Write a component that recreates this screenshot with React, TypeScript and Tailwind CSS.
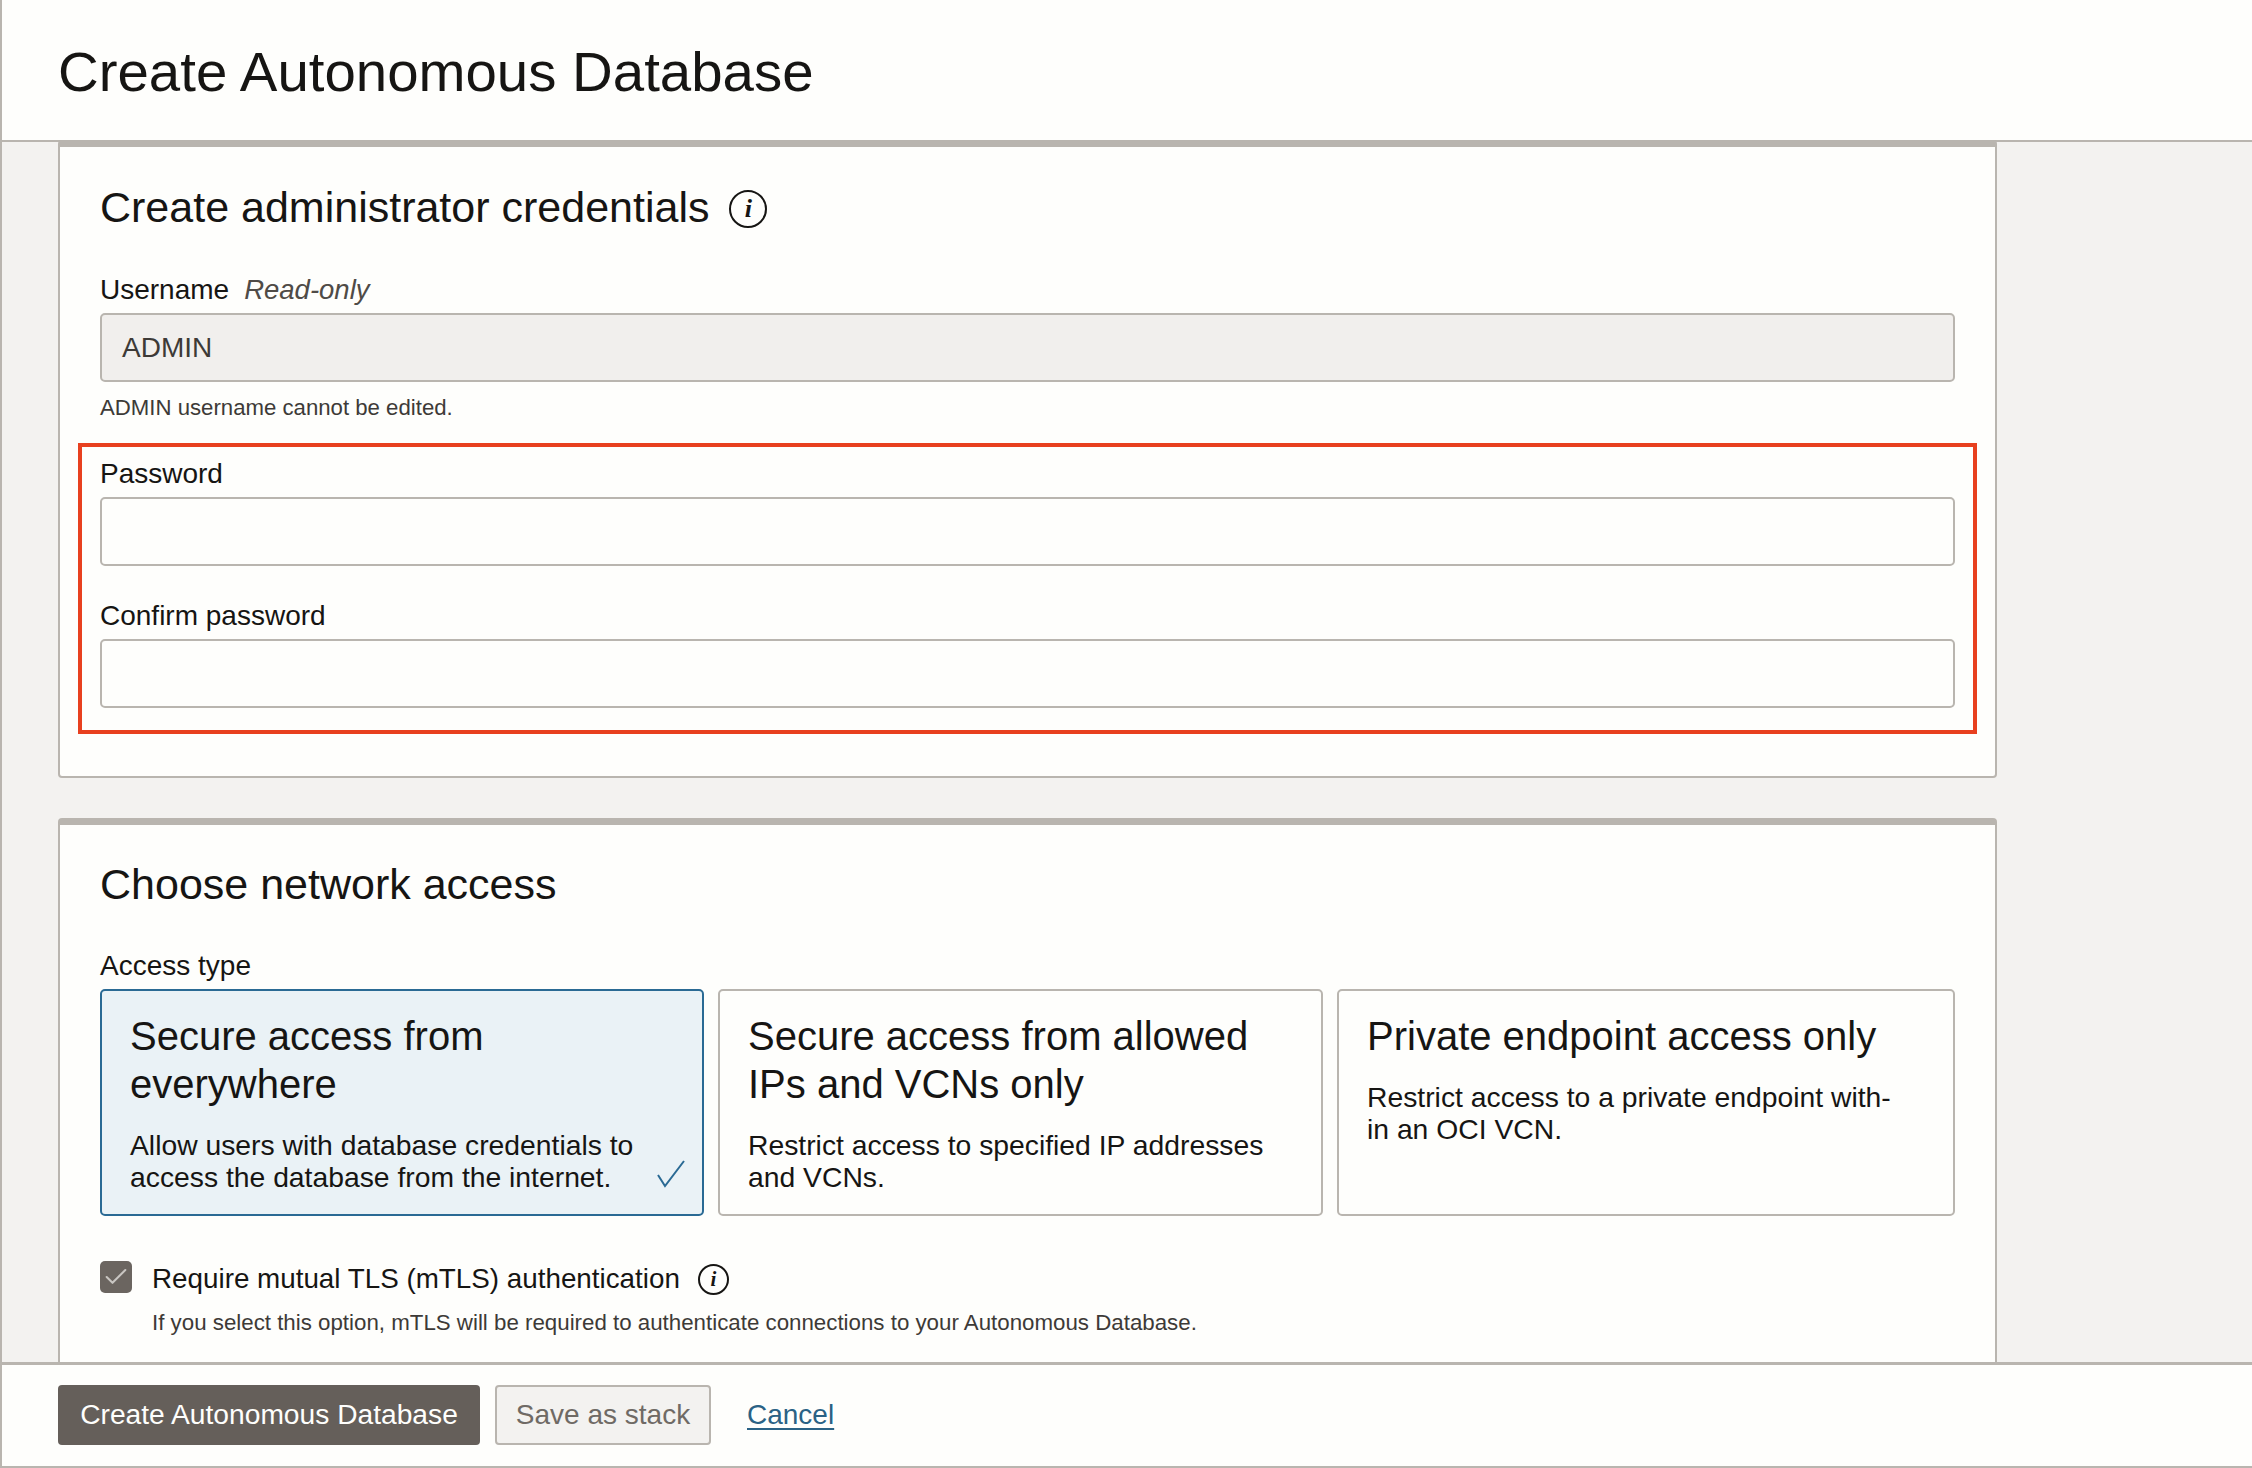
import { Check } from 'lucide-react';

const sans = 'font-["Liberation_Sans",Arial,sans-serif]';

function InfoIcon({ className }: { className: string }) {
    return (
        <span
            className={`inline-flex shrink-0 items-center justify-center rounded-full border-2 border-[#161513] font-["Liberation_Serif",serif] font-bold italic leading-none text-[#161513] ${className}`}
        >
            i
        </span>
    );
}

function Field({ label, readOnly, value }: { label: string; readOnly?: boolean; value?: string }) {
    return (
        <div>
            <div className="flex h-[36px] items-center gap-[15px] text-[28px] leading-[36px] text-[#161513]">
                <span>{label}</span>
                {readOnly && <span className="text-[27.5px] italic text-[#4f4b47]">Read-only</span>}
            </div>
            <div
                className={`mt-[5px] flex h-[69px] items-center rounded-[5px] border-2 border-[#b9b5af] px-[20px] text-[28px] text-[#3d3a37] ${
                    readOnly ? 'bg-[#f1efed]' : 'bg-[#fefefc]'
                }`}
            >
                {value}
            </div>
        </div>
    );
}

type TileProps = { title: string; body: string; selected?: boolean };

function Tile({ title, body, selected }: TileProps) {
    return (
        <div
            className={`relative h-[227px] rounded-[5px] border-2 px-[28px] pt-[21px] ${
                selected ? 'border-[#2a6a94] bg-[#eaf2f6]' : 'border-[#b9b5af] bg-[#fefefc]'
            }`}
        >
            <h3 className="text-[40px] leading-[48px] text-[#161513]">{title}</h3>
            <p className="mt-[21px] whitespace-pre-line text-[28.3px] leading-[32px] text-[#161513]">{body}</p>
            {selected && (
                <svg
                    viewBox="0 0 28 28"
                    className="absolute bottom-[26px] right-[17px] h-[28px] w-[28px]"
                    fill="none"
                    stroke="#2a6a94"
                    strokeWidth="2"
                >
                    <path d="M1 15 L8 26 L27 1" />
                </svg>
            )}
        </div>
    );
}

export default function App() {
    return (
        <div className={`flex h-[1468px] w-[2252px] flex-col overflow-hidden border-b-2 border-l-2 border-[#b9b5af] bg-[#f3f2f0] ${sans}`}>
            <header className="flex h-[142px] shrink-0 items-center border-b-2 border-[#b9b5af] bg-[#fefefc] pt-[4px] pl-[56px]">
                <h1 className="text-[56.4px] leading-none text-[#161513]">Create Autonomous Database</h1>
            </header>

            <main className="-mt-[2px] flex min-h-0 flex-1 flex-col gap-[40px] overflow-hidden pl-[56px]">
                <section className="h-[638px] w-[1939px] shrink-0 rounded-[4px] border-x-2 border-b-2 border-t-[7px] border-[#b9b5af] bg-[#fefefc] px-[40px]">
                    <div className="flex h-[80px] items-center gap-[20px] pt-[40px]">
                        <h2 className="text-[43px] leading-none text-[#161513]">Create administrator credentials</h2>
                        <InfoIcon className="mt-[3px] h-[38px] w-[38px] text-[26px]" />
                    </div>

                    <div className="mt-[45px]">
                        <Field label="Username" readOnly value="ADMIN" />
                    </div>
                    <p className="mt-[12px] text-[22.2px] leading-[28px] text-[#3d3a37]">ADMIN username cannot be edited.</p>

                    <div className="-mx-[22px] mt-[21px] flex h-[291px] flex-col gap-[32px] border-4 border-[#e8401f] px-[18px] pt-[9px]">
                        <Field label="Password" />
                        <Field label="Confirm password" />
                    </div>
                </section>

                <section className="min-h-0 w-[1939px] flex-1 rounded-t-[4px] border-x-2 border-t-[7px] border-[#b9b5af] bg-[#fefefc] px-[40px]">
                    <h2 className="pt-[35px] text-[43px] leading-[48px] text-[#161513]">Choose network access</h2>
                    <div className="mt-[40px] text-[28px] leading-[36px] text-[#161513]">Access type</div>
                    <div className="mt-[5px] grid grid-cols-[604px_605px_1fr] gap-[14px]">
                        <Tile
                            selected
                            title="Secure access from everywhere"
                            body="Allow users with database credentials to access the database from the internet."
                        />
                        <Tile
                            title="Secure access from allowed IPs and VCNs only"
                            body="Restrict access to specified IP addresses and VCNs."
                        />
                        <Tile
                            title="Private endpoint access only"
                            body={'Restrict access to a private endpoint with-\nin an OCI VCN.'}
                        />
                    </div>

                    <div className="mt-[45px] flex h-[36px] items-center gap-[20px]">
                        <span className="-mt-[5px] flex h-[32px] w-[32px] shrink-0 items-center justify-center rounded-[5px] bg-[#6b6560]">
                            <Check className="h-[28px] w-[28px] text-[#c9c6c2]" strokeWidth={1.75} />
                        </span>
                        <span className="text-[27.8px] leading-[36px] text-[#161513]">Require mutual TLS (mTLS) authentication</span>
                        <InfoIcon className="ml-[-2px] h-[31px] w-[31px] text-[21px]" />
                    </div>
                    <p className="mt-[12px] pl-[52px] text-[22.3px] leading-[28px] text-[#3d3a37]">
                        If you select this option, mTLS will be required to authenticate connections to your Autonomous Database.
                    </p>
                </section>
            </main>

            <footer className="flex h-[104px] shrink-0 items-center gap-[15px] border-t-[3px] border-[#b9b5af] bg-[#fefefc] pb-[2px] pl-[56px]">
                <button className="h-[60px] w-[422px] rounded-[4px] bg-[#655f5a] text-[28.2px] text-[#fefefc]">
                    Create Autonomous Database
                </button>
                <button className="h-[60px] w-[216px] rounded-[4px] border-2 border-[#b9b5af] bg-[#f3f2f0] text-[28px] text-[#6f6a65]">
                    Save as stack
                </button>
                <a className="ml-[21px] text-[28px] text-[#2a6285] underline underline-offset-[4px]">Cancel</a>
            </footer>
        </div>
    );
}
